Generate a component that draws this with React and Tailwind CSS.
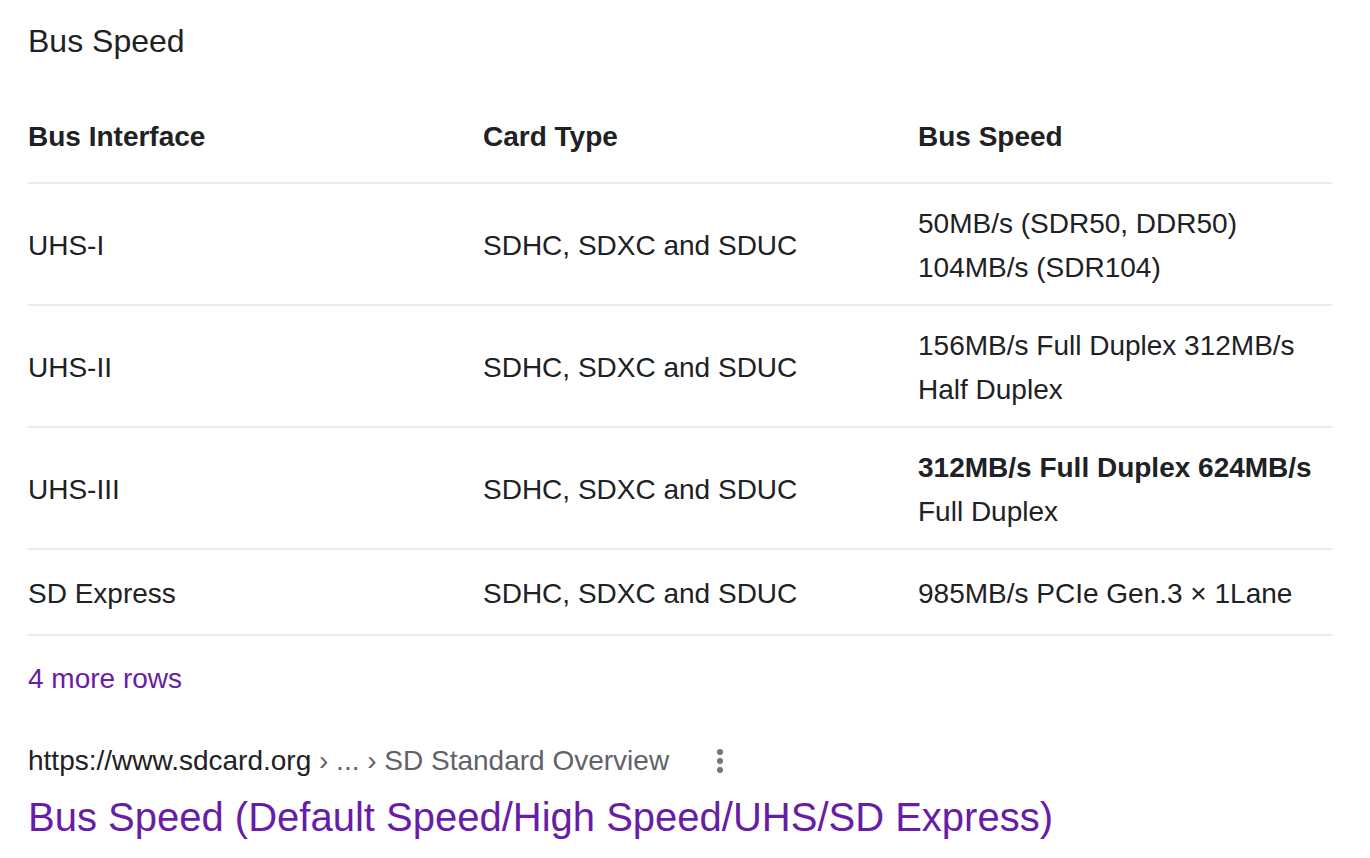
const rows = [
  { iface: 'UHS-I', card: 'SDHC, SDXC and SDUC', speed: [{ t: '50MB/s (SDR50, DDR50)' }, { t: '104MB/s (SDR104)' }] },
  { iface: 'UHS-II', card: 'SDHC, SDXC and SDUC', speed: [{ t: '156MB/s Full Duplex 312MB/s' }, { t: 'Half Duplex' }] },
  { iface: 'UHS-III', card: 'SDHC, SDXC and SDUC', speed: [{ t: '312MB/s Full Duplex 624MB/s', bold: true }, { t: 'Full Duplex' }] },
  { iface: 'SD Express', card: 'SDHC, SDXC and SDUC', speed: [{ t: '985MB/s PCIe Gen.3 × 1Lane' }], short: true },
];

function Kebab() {
  return (
    <svg width="24" height="30" viewBox="0 0 24 30" className="shrink-0">
      <circle cx="12" cy="6" r="3" fill="#70757a" />
      <circle cx="12" cy="15" r="3" fill="#70757a" />
      <circle cx="12" cy="24" r="3" fill="#70757a" />
    </svg>
  );
}

export default function App() {
  return (
    <div className="w-[1370px] h-[858px] bg-white pl-[28px] pr-[38px] text-[#202124] overflow-hidden"
      style={{ fontFamily: '"Liberation Sans", Arial, sans-serif' }}>
      <div className="h-[92px] pt-[21px]">
        <h2 className="text-[32px] leading-[40px] font-normal">Bus Speed</h2>
      </div>

      <div className="grid grid-cols-[455px_435px_1fr] h-[92px] items-center border-b-2 border-[#ebebeb] text-[28px] leading-[32px] font-bold">
        <div>Bus Interface</div>
        <div>Card Type</div>
        <div>Bus Speed</div>
      </div>

      {rows.map((r) => (
        <div key={r.iface}
          className={`grid grid-cols-[455px_435px_1fr] items-center pt-[3px] border-b-2 border-[#ebebeb] text-[28px] ${r.short ? 'h-[86px]' : 'h-[122px]'}`}>
          <div className="leading-[32px]">{r.iface}</div>
          <div className="leading-[32px]">{r.card}</div>
          <div className="leading-[44px]">
            {r.speed.map((s) => (
              <div key={s.t} className={s.bold ? 'font-bold' : ''}>{s.t}</div>
            ))}
          </div>
        </div>
      ))}

      <div className="mt-[27px] text-[28px] leading-[32px] text-[#681da8]">4 more rows</div>

      <div className="mt-[50px] flex items-center text-[28px] leading-[32px]">
        <span className="text-[#202124]">https://www.sdcard.org</span>
        <span className="text-[#5f6368]">&nbsp;› ... › SD Standard Overview</span>
        <span className="ml-[39px] flex items-center"><Kebab /></span>
      </div>

      <div className="mt-[14px] text-[40px] leading-[52px] text-[#681da8]">
        Bus Speed (Default Speed/High Speed/UHS/SD Express)
      </div>
    </div>
  );
}
